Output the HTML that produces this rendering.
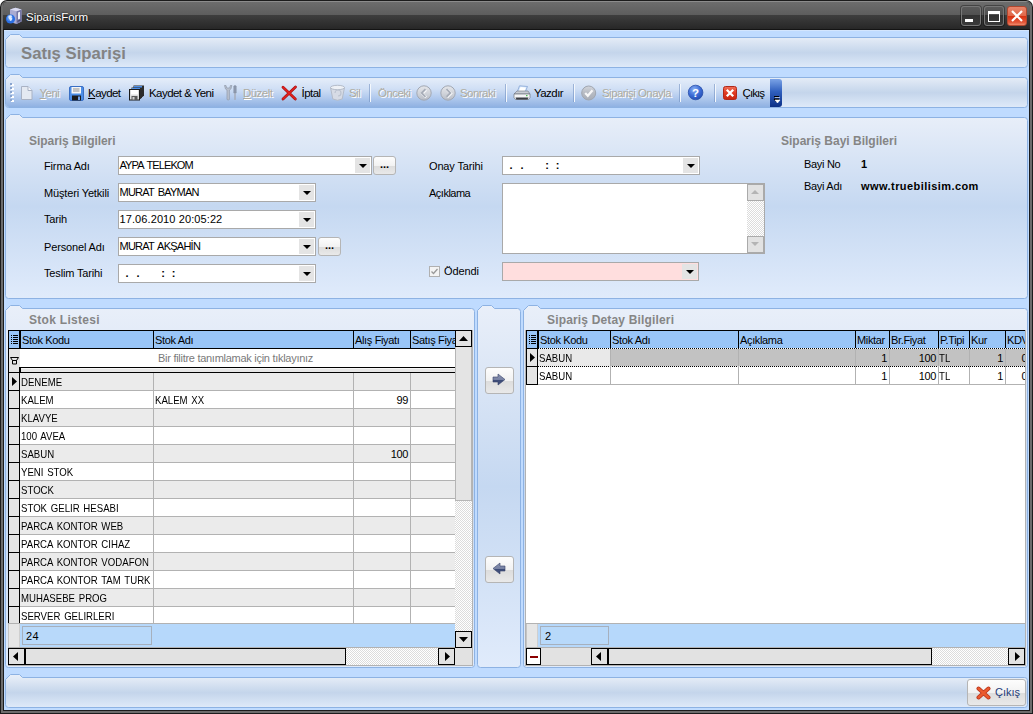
<!DOCTYPE html>
<html><head><meta charset="utf-8"><title>SiparisForm</title>
<style>
html,body{margin:0;padding:0}
body{width:1033px;height:714px;position:relative;overflow:hidden;background:#fff;font:11px "Liberation Sans",sans-serif;color:#000}
*{box-sizing:border-box}
.a,.pn,.t{position:absolute}
.t{white-space:nowrap;line-height:13px}
.win{left:0;top:0;width:1033px;height:714px;background:#1c1c1c;border-radius:7px 7px 0 0}
.client{left:4px;top:30px;width:1025px;height:680px;background:#bfdbff}
.h1{font-weight:bold;font-size:16.7px;color:#838383;line-height:20px}
.h2{font-weight:bold;font-size:12px;color:#858585;line-height:15px}
.inp{background:#fff;border:1px solid #a9a9a9;height:19px}
.dd{position:absolute;right:1px;top:1px;bottom:1px;width:15px;background:#e4e4e4}
.dd:after{content:"";position:absolute;left:3.5px;top:6px;border:4px solid transparent;border-top:4px solid #000;border-bottom:0}
.dis{color:#aeab9f;text-shadow:1px 1px 0 #fff}
.btn{border:1px solid #b5b5b5;border-radius:3px;background:linear-gradient(#fdfdfd,#f2f2f2 50%,#dcdcdc 51%,#e9e9e9)}
.sep{width:2px;height:18px;top:84px;border-left:1px solid rgba(110,140,190,.55);border-right:1px solid #f4f8fd}
.gh{background:#99c5f7;border:1px solid #000;border-left:0;height:18px;top:0;padding:2px 0 0 2px;overflow:hidden;white-space:nowrap}
.grid{background:#fff;overflow:hidden}
.row{position:absolute;left:0;height:18px;border-bottom:1px solid #b4b4b4}
.c{position:absolute;top:0;height:17px;border-right:1px solid #b4b4b4;padding:2px 0 0 1px;white-space:nowrap;overflow:hidden;letter-spacing:-0.35px}
.r{text-align:right;padding-right:2px}
.ind{position:absolute;left:0;top:0;width:13px;height:18px;background:#e6e6e6;border:1px solid #000;border-top:0}
.sb{background:#e2e2e2;border:1px solid #000}
.u{transform-origin:0 0}
.hd{letter-spacing:-0.35px}
.dots{background-image:conic-gradient(#fff 25%,#dcdcdc 0 50%,#fff 0 75%,#dcdcdc 0);background-size:2px 2px}
</style></head><body>
<svg width="0" height="0" style="position:absolute"><defs>
<linearGradient id="gs" x1="0" y1="0" x2="0" y2="1"><stop offset="0" stop-color="#e9eff9"/><stop offset="0.12" stop-color="#e3ebf6"/><stop offset="0.55" stop-color="#c4d5eb"/><stop offset="1" stop-color="#dfeaf9"/></linearGradient>
<linearGradient id="gl" x1="0" y1="0" x2="0" y2="1"><stop offset="0" stop-color="#e9eff9"/><stop offset="0.5" stop-color="#c5d8f1"/><stop offset="1" stop-color="#e0ebfb"/></linearGradient>
<linearGradient id="ga" x1="0" y1="0" x2="0" y2="1"><stop offset="0" stop-color="#8a93b0"/><stop offset="0.5" stop-color="#7882a4"/><stop offset="0.52" stop-color="#3c4b77"/><stop offset="1" stop-color="#43527e"/></linearGradient>
<linearGradient id="gc" x1="0" y1="0" x2="0" y2="1"><stop offset="0" stop-color="#e4e6ea"/><stop offset="0.5" stop-color="#d2d5db"/><stop offset="1" stop-color="#b9bdc6"/></linearGradient>
<linearGradient id="gc2" x1="0" y1="0" x2="0" y2="1"><stop offset="0" stop-color="#d3d6dc"/><stop offset="0.5" stop-color="#b7bbc3"/><stop offset="1" stop-color="#a9aeb8"/></linearGradient>
<radialGradient id="gh" cx="0.4" cy="0.3" r="0.8"><stop offset="0" stop-color="#8db2f4"/><stop offset="0.5" stop-color="#3f6fd8"/><stop offset="1" stop-color="#1d45ab"/></radialGradient>
<linearGradient id="gx" x1="0" y1="0" x2="0" y2="1"><stop offset="0" stop-color="#f0705a"/><stop offset="0.5" stop-color="#e03a22"/><stop offset="1" stop-color="#c8240f"/></linearGradient>
</defs></svg>
<div class="a win"></div>
<div class="a" style="left:1px;top:1px;width:1031px;height:712px;border-radius:6px 6px 0 0;background:linear-gradient(#8c8c8c 0,#8c8c8c 1px,#6c6c6c 1px)"></div>
<div class="a" style="left:3px;top:2px;width:1027px;height:709px;border-radius:4px 4px 0 0;background:#1c1c1c"></div>
<div class="a" style="left:3px;top:2px;width:1027px;height:28px;border-radius:4px 4px 0 0;background:linear-gradient(#6d6d6d 0,#5d5d5d 13px,#3e3e3e 13px,#272727 27px,#141414 27px)"></div>
<div class="a client"></div><div class="a" style="left:4px;top:30px;width:1025px;height:1px;background:#d3e5fd"></div>

<svg class="a" style="left:5px;top:7px" width="18" height="18" viewBox="0 0 18 18">
<path d="M5,2.500 L10.500,0.800 L16.500,2.500 L16.500,14.500 L11.500,17 L5,15 Z" fill="#a9abd2"/><path d="M11.500,4.200 L16.500,2.500 L16.500,14.500 L11.500,17 Z" fill="#7577a6"/><path d="M5,2.500 L10.500,0.800 L16.500,2.500 L11.500,4.200 Z" fill="#d9daf0"/>
<path d="M13,5.500l2,-0.700v7l-2,0.800z" fill="#eeeef8"/><path d="M12.500,13.800l3,-1.200v1l-3,1.300z" fill="#44466e"/>
<circle cx="5.500" cy="12" r="4.600" fill="#2b6fe3"/><circle cx="4.800" cy="11" r="3" fill="#4f8ff0"/><path d="M3.500,8.800q2.200,-1.300 3.600,0.200q-1.300,1.200 0.200,2.700q-0.600,2.300 -2,2.300q-0.300,-1.500 -1.500,-2.200q-0.800,-1.500 -0.300,-3z" fill="#dcebff"/></svg>
<div class="t" style="left:26px;top:11px;color:#fff;font-size:11.5px;text-shadow:0 0 2px #000">SiparisForm</div>
<div class="a" style="left:961px;top:6px;width:20px;height:20px;border:1px solid #777;border-radius:3px;background:linear-gradient(#5a5a5a,#505050 45%,#323232 47%,#3a3a3a);box-shadow:0 0 0 1px rgba(0,0,0,.35)"><div class="a" style="left:3px;top:12px;width:8px;height:3px;background:#fff"></div></div>
<div class="a" style="left:984px;top:6px;width:20px;height:20px;border:1px solid #777;border-radius:3px;background:linear-gradient(#5a5a5a,#505050 45%,#323232 47%,#3a3a3a);box-shadow:0 0 0 1px rgba(0,0,0,.35)"><div class="a" style="left:3px;top:4px;width:12px;height:11px;border:1px solid #fff;border-top-width:3px"></div></div>
<div class="a" style="left:1007px;top:6px;width:20px;height:20px;border:1px solid #b0472f;border-radius:3px;background:linear-gradient(#e8866b,#e0674a 48%,#d62f0e 50%,#e3573a 85%,#ee8a6c)"><svg class="a" style="left:3px;top:3px" width="12" height="12" viewBox="0 0 12 12"><path d="M1,1 L11,11 M11,1 L1,11" stroke="#fff" stroke-width="2.2"/></svg></div>

<svg class="pn" style="left:5px;top:34px" width="1023" height="34" viewBox="0 0 1023 34"><path d="M0.5,5.5 L5.5,0.5 L14.5,0.5 L17.5,3.5 L1019.5,3.5 Q1022.5,3.5 1022.5,6.5 L1022.5,30.5 Q1022.5,33.5 1019.5,33.5 L3.5,33.5 Q0.5,33.5 0.5,30.5 Z" fill="url(#gs)" stroke="#8db2e3"/></svg>
<div class="t h1" style="left:21px;top:44px">Satış Siparişi</div>
<svg class="pn" style="left:5px;top:74px" width="1023" height="34" viewBox="0 0 1023 34"><path d="M0.5,5.5 L5.5,0.5 L14.5,0.5 L17.5,3.5 L1019.5,3.5 Q1022.5,3.5 1022.5,6.5 L1022.5,30.5 Q1022.5,33.5 1019.5,33.5 L3.5,33.5 Q0.5,33.5 0.5,30.5 Z" fill="url(#gs)" stroke="#8db2e3"/></svg>
<svg class="pn" style="left:5px;top:114px" width="1023" height="185" viewBox="0 0 1023 185"><path d="M0.5,5.5 L5.5,0.5 L14.5,0.5 L17.5,3.5 L1019.5,3.5 Q1022.5,3.5 1022.5,6.5 L1022.5,181.5 Q1022.5,184.5 1019.5,184.5 L3.5,184.5 Q0.5,184.5 0.5,181.5 Z" fill="url(#gl)" stroke="#8db2e3"/></svg>
<svg class="pn" style="left:5px;top:305px" width="470" height="363" viewBox="0 0 470 363"><path d="M0.5,5.5 L5.5,0.5 L14.5,0.5 L17.5,3.5 L466.5,3.5 Q469.5,3.5 469.5,6.5 L469.5,359.5 Q469.5,362.5 466.5,362.5 L3.5,362.5 Q0.5,362.5 0.5,359.5 Z" fill="url(#gl)" stroke="#8db2e3"/></svg>
<svg class="pn" style="left:477px;top:305px" width="44" height="363" viewBox="0 0 44 363"><path d="M0.5,5.5 L5.5,0.5 L14.5,0.5 L17.5,3.5 L40.5,3.5 Q43.5,3.5 43.5,6.5 L43.5,359.5 Q43.5,362.5 40.5,362.5 L3.5,362.5 Q0.5,362.5 0.5,359.5 Z" fill="url(#gl)" stroke="#8db2e3"/></svg>
<svg class="pn" style="left:523px;top:305px" width="505" height="363" viewBox="0 0 505 363"><path d="M0.5,5.5 L5.5,0.5 L14.5,0.5 L17.5,3.5 L501.5,3.5 Q504.5,3.5 504.5,6.5 L504.5,359.5 Q504.5,362.5 501.5,362.5 L3.5,362.5 Q0.5,362.5 0.5,359.5 Z" fill="url(#gl)" stroke="#8db2e3"/></svg>
<svg class="pn" style="left:5px;top:674px" width="1023" height="34" viewBox="0 0 1023 34"><path d="M0.5,5.5 L5.5,0.5 L14.5,0.5 L17.5,3.5 L1019.5,3.5 Q1022.5,3.5 1022.5,6.5 L1022.5,30.5 Q1022.5,33.5 1019.5,33.5 L3.5,33.5 Q0.5,33.5 0.5,30.5 Z" fill="url(#gs)" stroke="#8db2e3"/></svg>
<div class="a" style="left:6px;top:79px;width:765px;height:28px;border-radius:3px 0 0 3px;background:linear-gradient(#e3ecf9,#d0dff5 35%,#b3cbee 65%,#8fb1e2)"></div>
<div class="a" style="left:770px;top:79px;width:12px;height:28px;border-radius:0 3px 3px 0;background:linear-gradient(#7ba3e6,#2f5fbe 45%,#0b2f86)"></div>
<svg class="a" style="left:773px;top:96px" width="8" height="8" viewBox="0 0 8 8"><path d="M1,0.5h5M1,3h5l-2.5,3z" fill="#000" stroke="#000"/><path d="M2,1.5h5M2,4h5l-2.5,3z" fill="#fff" stroke="#fff" stroke-width="0.6"/></svg>
<div class="a" style="left:11px;top:84px;width:3px;height:18px;background-image:linear-gradient(#fff 0,#fff 2px,transparent 2px);background-size:3px 4px"></div>
<div class="a" style="left:10px;top:83px;width:2px;height:18px;background-image:linear-gradient(#8aa5cf 0,#8aa5cf 2px,transparent 2px);background-size:2px 4px"></div>
<svg class="a" style="left:20px;top:85px" width="14" height="16" viewBox="0 0 14 16"><path d="M1.5,1.5h6.500l4,4v9h-10.500z" fill="#e4e9f2" stroke="#a9b2c4"/><path d="M8,1.500v4h4" fill="#f4f6fb" stroke="#a9b2c4"/></svg>
<div class="t dis" style="left:39.5px;top:87px;font-size:11.5px;letter-spacing:-0.55px"><u>Y</u>eni</div>
<svg class="a" style="left:69px;top:86px" width="15" height="15" viewBox="0 0 15 15"><rect x="0.500" y="0.500" width="14" height="14" rx="1.500" fill="#4d8ee6" stroke="#3a6fc4"/><rect x="2.500" y="1" width="9.500" height="6.500" fill="#f6f6f6"/><path d="M4,3h6.500M4,5h6.500" stroke="#8f8f8f"/><rect x="3" y="9.500" width="9" height="5" fill="#1a1a1a"/><rect x="9" y="10.500" width="2" height="3.500" fill="#6f9fe6"/></svg>
<div class="t" style="left:88px;top:87px;font-size:11.5px;letter-spacing:-0.55px"><u>K</u>aydet</div>
<svg class="a" style="left:129px;top:85px" width="16" height="16" viewBox="0 0 16 16"><path d="M4.500,0.500h10.500v10l-1.500,1.500h-9z" fill="#2b2b2b"/><rect x="5" y="1" width="8" height="2" fill="#4d8ee6"/><path d="M2.500,2.500h10.500v10l-1.500,1.500h-9z" fill="#2b2b2b"/><rect x="3" y="3" width="8" height="2" fill="#4d8ee6"/><rect x="0.500" y="4.500" width="10" height="10.500" fill="#dcdcdc" stroke="#1a1a1a"/><rect x="2" y="5" width="7" height="4.500" fill="#fff"/><rect x="2.500" y="11" width="6" height="4" fill="#5a5a5a"/><rect x="3.500" y="12" width="2" height="2.500" fill="#d0d0d0"/></svg>
<div class="t" style="left:149px;top:87px;font-size:11.5px;letter-spacing:-0.55px">Kaydet &amp; Yeni</div>
<svg class="a" style="left:223px;top:84px" width="16" height="18" viewBox="0 0 16 18"><path d="M1.500,1.500l1,3.500l1.500,1v9.500q1.200,1 2.400,0v-9.500l1.500,-1l1,-3.500h-1.500l-0.700,2.500h-3l-0.700,-2.500z" fill="#b9c1ce" stroke="#8f99ab" stroke-width="0.700"/><path d="M10.800,2q1.200,-1 2.400,0v7h-2.400z" fill="#8f9aae" stroke="#7d889c" stroke-width="0.500"/><path d="M11.500,9h1v6.500q-0.500,0.800 -1,0z" fill="#c9cfd9" stroke="#9aa3b3" stroke-width="0.600"/></svg>
<div class="t dis" style="left:243px;top:87px;font-size:11.5px;letter-spacing:-0.55px"><u>D</u>üzelt</div>
<svg class="a" style="left:281px;top:85px" width="17" height="16" viewBox="0 0 17 16"><path d="M2,2.200 L14.300,14 M14.500,2 L2,14" stroke="#a01414" stroke-width="2.800" stroke-linecap="round"/><path d="M2,2.200 L14.300,14 M14.500,2 L2,14" stroke="#e22020" stroke-width="1.700" stroke-linecap="round"/></svg>
<div class="t" style="left:301.5px;top:87px;font-size:11.5px;letter-spacing:-0.55px">İptal</div>
<svg class="a" style="left:329px;top:84px" width="17" height="18" viewBox="0 0 17 18"><path d="M1.500,3.500l2.300,11.500q4.700,2.500 9.400,0l2.300,-11.500z" fill="#d6dbe5" stroke="#b3bbc9"/><ellipse cx="8.500" cy="3.500" rx="7" ry="2.200" fill="#eef1f6" stroke="#b3bbc9"/><path d="M6,9a3,3 0 1 1 3,3" fill="none" stroke="#bcc3d0" stroke-width="1.200"/></svg>
<div class="t dis" style="left:349px;top:87px;font-size:11.5px;letter-spacing:-0.55px">Sil</div>
<div class="a sep" style="left:369px"></div>
<div class="t dis" style="left:378px;top:87px;font-size:11.5px;letter-spacing:-0.55px">Önceki</div>
<svg class="a" style="left:416px;top:85px" width="16" height="16" viewBox="0 0 16 16"><circle cx="8" cy="8" r="7.200" fill="url(#gc)" stroke="#a2a8b3"/><path d="M9.500,4.200L5.700,8l3.800,3.800" fill="none" stroke="#f6f7f9" stroke-width="2.600" transform="translate(0.600,0.600)"/><path d="M9.500,4.200L5.700,8l3.800,3.800" fill="none" stroke="#a7adb8" stroke-width="1.800"/></svg>
<svg class="a" style="left:440px;top:85px" width="16" height="16" viewBox="0 0 16 16"><circle cx="8" cy="8" r="7.200" fill="url(#gc)" stroke="#a2a8b3"/><path d="M6.500,4.200L10.300,8l-3.800,3.800" fill="none" stroke="#f6f7f9" stroke-width="2.600" transform="translate(0.600,0.600)"/><path d="M6.500,4.200L10.300,8l-3.800,3.800" fill="none" stroke="#a7adb8" stroke-width="1.800"/></svg>
<div class="t dis" style="left:460px;top:87px;font-size:11.5px;letter-spacing:-0.55px">Sonraki</div>
<div class="a sep" style="left:505px"></div>
<svg class="a" style="left:513px;top:85px" width="18" height="16" viewBox="0 0 18 16"><path d="M6.500,0.800l8,0.700l-2.500,6h-8z" fill="#cfe3fb" stroke="#7f9fd0" stroke-width="0.700"/><path d="M7.500,2l5.500,0.500l-1.800,4.500h-5.700z" fill="#fff"/><path d="M1,9l3,-3h11l2,3z" fill="#c8ccd4" stroke="#6d727c" stroke-width="0.600"/><path d="M1,9h16v3.500l-1.500,2h-13l-1.500,-2z" fill="#f3f4f6" stroke="#6d727c" stroke-width="0.700"/><path d="M2.500,12.500h13l-1,2h-11z" fill="#3a3d44"/><rect x="13" y="10" width="1.500" height="1.200" fill="#4fc04f"/></svg>
<div class="t" style="left:534px;top:87px;font-size:11.5px;letter-spacing:-0.55px">Yazdır</div>
<div class="a sep" style="left:573px"></div>
<svg class="a" style="left:581px;top:85px" width="16" height="16" viewBox="0 0 16 16"><circle cx="7.700" cy="8" r="7" fill="url(#gc2)" stroke="#a0a6b0"/><path d="M4.200,8l2.600,2.800l4.700,-5.600" fill="none" stroke="#f7f7f8" stroke-width="2.200"/></svg>
<div class="t dis" style="left:602px;top:87px;font-size:11.5px;letter-spacing:-0.55px">Siparişi Onayla</div>
<div class="a sep" style="left:679px"></div>
<svg class="a" style="left:687px;top:84px" width="17" height="17" viewBox="0 0 17 17"><circle cx="8.600" cy="8.500" r="7.300" fill="url(#gh)" stroke="#2a4fa8" stroke-width="0.800"/><text x="8.600" y="12.700" text-anchor="middle" font-family="Liberation Sans,sans-serif" font-weight="bold" font-size="11.500" fill="#fff">?</text></svg>
<div class="a sep" style="left:714px"></div>
<svg class="a" style="left:723px;top:86px" width="14" height="14" viewBox="0 0 14 14"><rect x="0.500" y="0.500" width="13" height="13" rx="2" fill="url(#gx)" stroke="#b0281a"/><path d="M3.800,3.800l6.400,6.400M10.200,3.800l-6.400,6.400" stroke="#fff" stroke-width="2.300"/></svg>
<div class="t" style="left:742.500px;top:87px;font-size:11.5px;letter-spacing:-0.9px">Çıkış</div>
<div class="t h2" style="left:29px;top:134px;letter-spacing:-0.05px">Sipariş Bilgileri</div>
<div class="t" style="left:44px;top:160px;letter-spacing:-0.15px;">Firma Adı</div>
<div class="a inp" style="left:118px;top:156px;width:254px;height:19px;background:#fff"><div class="t" style="left:0.5px;top:2px;letter-spacing:-0.9px;word-spacing:1.5px">AYPA TELEKOM</div><div class="dd"></div></div>
<div class="a btn" style="left:373px;top:156px;width:23px;height:19px"><div class="t" style="left:6px;top:1px;font-weight:bold">...</div></div>
<div class="t" style="left:44px;top:187px;letter-spacing:-0.15px;">Müşteri Yetkili</div>
<div class="a inp" style="left:118px;top:183px;width:198px;height:19px;background:#fff"><div class="t" style="left:0.5px;top:2px;letter-spacing:-0.75px;word-spacing:1.5px">MURAT BAYMAN</div><div class="dd"></div></div>
<div class="t" style="left:44px;top:213px;letter-spacing:-0.15px;">Tarih</div>
<div class="a inp" style="left:118px;top:210px;width:198px;height:19px;background:#fff"><div class="t" style="left:0.5px;top:2px;letter-spacing:0.1px;word-spacing:0">17.06.2010 20:05:22</div><div class="dd"></div></div>
<div class="t" style="left:44px;top:241px;letter-spacing:-0.15px;">Personel Adı</div>
<div class="a inp" style="left:118px;top:237px;width:198px;height:19px;background:#fff"><div class="t" style="left:0.5px;top:2px;letter-spacing:-0.75px;word-spacing:1.5px">MURAT AKŞAHİN</div><div class="dd"></div></div>
<div class="a btn" style="left:318px;top:237px;width:23px;height:19px"><div class="t" style="left:6px;top:1px;font-weight:bold">...</div></div>
<div class="t" style="left:44px;top:267px;letter-spacing:-0.15px;">Teslim Tarihi</div>
<div class="a inp" style="left:118px;top:264px;width:198px;height:19px;background:#fff"><div class="t" style="left:0.5px;top:2px;letter-spacing:-0.75px;word-spacing:1.5px"><span style="position:absolute;left:4.5px;top:0;width:6px;text-align:center;font-weight:bold;letter-spacing:0">.</span><span style="position:absolute;left:15.5px;top:0;width:6px;text-align:center;font-weight:bold;letter-spacing:0">.</span><span style="position:absolute;left:40.5px;top:0;width:6px;text-align:center;font-weight:bold;letter-spacing:0">:</span><span style="position:absolute;left:51px;top:0;width:6px;text-align:center;font-weight:bold;letter-spacing:0">:</span></div><div class="dd"></div></div>
<div class="t" style="left:429px;top:160px;letter-spacing:-0.15px;">Onay Tarihi</div>
<div class="a inp" style="left:502px;top:156px;width:198px;height:19px;background:#fff"><div class="t" style="left:0.5px;top:2px;letter-spacing:-0.75px;word-spacing:1.5px"><span style="position:absolute;left:4.5px;top:0;width:6px;text-align:center;font-weight:bold;letter-spacing:0">.</span><span style="position:absolute;left:15.5px;top:0;width:6px;text-align:center;font-weight:bold;letter-spacing:0">.</span><span style="position:absolute;left:40.5px;top:0;width:6px;text-align:center;font-weight:bold;letter-spacing:0">:</span><span style="position:absolute;left:51px;top:0;width:6px;text-align:center;font-weight:bold;letter-spacing:0">:</span></div><div class="dd"></div></div>
<div class="t" style="left:429px;top:187px;letter-spacing:-0.15px;letter-spacing:-0.5px">Açıklama</div>
<div class="a inp" style="left:502px;top:183px;width:263px;height:71px"><div class="a dots" style="right:0;top:0;width:17px;height:69px"></div><div class="a" style="right:0;top:0;width:17px;height:17px;background:#e2e2e2;border:1px solid #aaa"><div class="a" style="left:3px;top:5px;border:4px solid transparent;border-bottom:4px solid #b4b4b4;border-top:0"></div></div><div class="a" style="right:0;bottom:0;width:17px;height:17px;background:#e2e2e2;border:1px solid #aaa"><div class="a" style="left:3px;top:5px;border:4px solid transparent;border-top:4px solid #b4b4b4;border-bottom:0"></div></div></div>
<div class="a" style="left:429px;top:266px;width:11px;height:11px;border:1px solid #b0b0b0;background:#f4f4f4"><svg class="a" style="left:0;top:0" width="9" height="9" viewBox="0 0 9 9"><path d="M1.500,4.500l2,2l4,-4.500" fill="none" stroke="#9a9a9a" stroke-width="1.300"/></svg></div>
<div class="t" style="left:444px;top:265px;letter-spacing:-0.15px;font-size:11px;letter-spacing:-0.1px">Ödendi</div>
<div class="a inp" style="left:502px;top:262px;width:197px;height:19px;background:#ffdede"><div class="t" style="left:0.5px;top:2px;letter-spacing:-0.75px;word-spacing:1.5px"></div><div class="dd"></div></div>
<div class="t h2" style="left:781px;top:134px">Sipariş Bayi Bilgileri</div>
<div class="t" style="left:804px;top:158px;letter-spacing:-0.15px;letter-spacing:-0.3px">Bayi No</div>
<div class="t" style="left:861px;top:158px;letter-spacing:-0.15px;font-weight:bold">1</div>
<div class="t" style="left:804px;top:180px;letter-spacing:-0.15px;letter-spacing:-0.3px">Bayi Adı</div>
<div class="t" style="left:861px;top:180px;letter-spacing:-0.15px;font-weight:bold;letter-spacing:0.43px">www.truebilisim.com</div>
<div class="t h2" style="left:29px;top:313px;letter-spacing:0.3px">Stok Listesi</div>
<div class="a" style="left:8px;top:330px;width:465px;height:336px;background:#b2b2b2;"></div>
<div class="a" style="left:8px;top:330px;width:447px;height:318px;background:#fff;"></div>
<div class="a" style="left:8px;top:330px;width:447px;height:19px;background:#000;"></div>
<div class="a" style="left:9px;top:331px;width:10px;height:17px;background:#99c5f7;"></div>
<div class="a" style="left:21px;top:331px;width:132px;height:17px;background:#99c5f7;overflow:hidden"><div class="t hd" style="left:1px;top:3px">Stok Kodu</div></div>
<div class="a" style="left:154px;top:331px;width:199px;height:17px;background:#99c5f7;overflow:hidden"><div class="t hd" style="left:1px;top:3px">Stok Adı</div></div>
<div class="a" style="left:354px;top:331px;width:56px;height:17px;background:#99c5f7;overflow:hidden"><div class="t hd" style="left:1px;top:3px">Alış Fiyatı</div></div>
<div class="a" style="left:411px;top:331px;width:44px;height:17px;background:#99c5f7;overflow:hidden"><div class="t hd" style="left:1px;top:3px">Satış Fiyatı</div></div>
<div class="a" style="left:8px;top:349px;width:1px;height:276px;background:#000;"></div>
<div class="a" style="left:9px;top:349px;width:11px;height:23px;background:#e4e4e4;"></div>
<div class="a" style="left:20px;top:349px;width:435px;height:18px;background:#fff;"><div class="t" style="left:138px;top:3px;color:#7a7a7a;letter-spacing:-0.28px">Bir filitre tanımlamak için tıklayınız</div></div>
<div class="a" style="left:19px;top:367px;width:436px;height:1px;background:#000;"></div>
<div class="a" style="left:19px;top:368px;width:2px;height:4px;background:#000;"></div>
<div class="a" style="left:21px;top:368px;width:434px;height:4px;background:#e6e6e6;border-top:1px solid #f6f6f6"></div>
<div class="a" style="left:8px;top:372px;width:447px;height:1px;background:#000;"></div>
<svg class="a" style="left:9px;top:356px" width="11" height="10" viewBox="0 0 11 10"><path d="M1.5,1.5h8l-2,3h-4zM3.500,4.500h4v3.500h-4z" fill="none" stroke="#000" stroke-width="1"/></svg>
<div class="a" style="left:20px;top:373px;width:435px;height:17px;background:#ebebeb;"></div>
<div class="a" style="left:20px;top:390px;width:435px;height:1px;background:#b2b2b2;"></div>
<div class="a" style="left:9px;top:373px;width:10px;height:17px;background:#e4e4e4;"></div>
<div class="a" style="left:19px;top:373px;width:1px;height:18px;background:#000;"></div>
<div class="a" style="left:9px;top:390px;width:10px;height:1px;background:#000;"></div>
<div class="t u" style="left:21px;top:376px;max-width:149px;overflow:hidden;word-spacing:1.2px;transform:scaleX(0.875)">DENEME</div>
<div class="a" style="left:20px;top:408px;width:435px;height:1px;background:#b2b2b2;"></div>
<div class="a" style="left:9px;top:391px;width:10px;height:17px;background:#e4e4e4;"></div>
<div class="a" style="left:19px;top:391px;width:1px;height:18px;background:#000;"></div>
<div class="a" style="left:9px;top:408px;width:10px;height:1px;background:#000;"></div>
<div class="t u" style="left:21px;top:394px;max-width:149px;overflow:hidden;word-spacing:1.2px;transform:scaleX(0.875)">KALEM</div>
<div class="t u" style="left:155px;top:394px;max-width:225px;overflow:hidden;word-spacing:1.2px;transform:scaleX(0.875)">KALEM XX</div>
<div class="t u" style="left:354px;top:394px;width:56px;text-align:right;transform:none;padding-right:2px;letter-spacing:-0.4px">99</div>
<div class="a" style="left:20px;top:409px;width:435px;height:17px;background:#ebebeb;"></div>
<div class="a" style="left:20px;top:426px;width:435px;height:1px;background:#b2b2b2;"></div>
<div class="a" style="left:9px;top:409px;width:10px;height:17px;background:#e4e4e4;"></div>
<div class="a" style="left:19px;top:409px;width:1px;height:18px;background:#000;"></div>
<div class="a" style="left:9px;top:426px;width:10px;height:1px;background:#000;"></div>
<div class="t u" style="left:21px;top:412px;max-width:149px;overflow:hidden;word-spacing:1.2px;transform:scaleX(0.875)">KLAVYE</div>
<div class="a" style="left:20px;top:444px;width:435px;height:1px;background:#b2b2b2;"></div>
<div class="a" style="left:9px;top:427px;width:10px;height:17px;background:#e4e4e4;"></div>
<div class="a" style="left:19px;top:427px;width:1px;height:18px;background:#000;"></div>
<div class="a" style="left:9px;top:444px;width:10px;height:1px;background:#000;"></div>
<div class="t u" style="left:21px;top:430px;max-width:149px;overflow:hidden;word-spacing:1.2px;transform:scaleX(0.875)">100 AVEA</div>
<div class="a" style="left:20px;top:445px;width:435px;height:17px;background:#ebebeb;"></div>
<div class="a" style="left:20px;top:462px;width:435px;height:1px;background:#b2b2b2;"></div>
<div class="a" style="left:9px;top:445px;width:10px;height:17px;background:#e4e4e4;"></div>
<div class="a" style="left:19px;top:445px;width:1px;height:18px;background:#000;"></div>
<div class="a" style="left:9px;top:462px;width:10px;height:1px;background:#000;"></div>
<div class="t u" style="left:21px;top:448px;max-width:149px;overflow:hidden;word-spacing:1.2px;transform:scaleX(0.875)">SABUN</div>
<div class="t u" style="left:354px;top:448px;width:56px;text-align:right;transform:none;padding-right:2px;letter-spacing:-0.4px">100</div>
<div class="a" style="left:20px;top:480px;width:435px;height:1px;background:#b2b2b2;"></div>
<div class="a" style="left:9px;top:463px;width:10px;height:17px;background:#e4e4e4;"></div>
<div class="a" style="left:19px;top:463px;width:1px;height:18px;background:#000;"></div>
<div class="a" style="left:9px;top:480px;width:10px;height:1px;background:#000;"></div>
<div class="t u" style="left:21px;top:466px;max-width:149px;overflow:hidden;word-spacing:1.2px;transform:scaleX(0.875)">YENI STOK</div>
<div class="a" style="left:20px;top:481px;width:435px;height:17px;background:#ebebeb;"></div>
<div class="a" style="left:20px;top:498px;width:435px;height:1px;background:#b2b2b2;"></div>
<div class="a" style="left:9px;top:481px;width:10px;height:17px;background:#e4e4e4;"></div>
<div class="a" style="left:19px;top:481px;width:1px;height:18px;background:#000;"></div>
<div class="a" style="left:9px;top:498px;width:10px;height:1px;background:#000;"></div>
<div class="t u" style="left:21px;top:484px;max-width:149px;overflow:hidden;word-spacing:1.2px;transform:scaleX(0.875)">STOCK</div>
<div class="a" style="left:20px;top:516px;width:435px;height:1px;background:#b2b2b2;"></div>
<div class="a" style="left:9px;top:499px;width:10px;height:17px;background:#e4e4e4;"></div>
<div class="a" style="left:19px;top:499px;width:1px;height:18px;background:#000;"></div>
<div class="a" style="left:9px;top:516px;width:10px;height:1px;background:#000;"></div>
<div class="t u" style="left:21px;top:502px;max-width:149px;overflow:hidden;word-spacing:1.2px;transform:scaleX(0.875)">STOK GELIR HESABI</div>
<div class="a" style="left:20px;top:517px;width:435px;height:17px;background:#ebebeb;"></div>
<div class="a" style="left:20px;top:534px;width:435px;height:1px;background:#b2b2b2;"></div>
<div class="a" style="left:9px;top:517px;width:10px;height:17px;background:#e4e4e4;"></div>
<div class="a" style="left:19px;top:517px;width:1px;height:18px;background:#000;"></div>
<div class="a" style="left:9px;top:534px;width:10px;height:1px;background:#000;"></div>
<div class="t u" style="left:21px;top:520px;max-width:149px;overflow:hidden;word-spacing:1.2px;transform:scaleX(0.875)">PARCA KONTOR WEB</div>
<div class="a" style="left:20px;top:552px;width:435px;height:1px;background:#b2b2b2;"></div>
<div class="a" style="left:9px;top:535px;width:10px;height:17px;background:#e4e4e4;"></div>
<div class="a" style="left:19px;top:535px;width:1px;height:18px;background:#000;"></div>
<div class="a" style="left:9px;top:552px;width:10px;height:1px;background:#000;"></div>
<div class="t u" style="left:21px;top:538px;max-width:149px;overflow:hidden;word-spacing:1.2px;transform:scaleX(0.875)">PARCA KONTOR CIHAZ</div>
<div class="a" style="left:20px;top:553px;width:435px;height:17px;background:#ebebeb;"></div>
<div class="a" style="left:20px;top:570px;width:435px;height:1px;background:#b2b2b2;"></div>
<div class="a" style="left:9px;top:553px;width:10px;height:17px;background:#e4e4e4;"></div>
<div class="a" style="left:19px;top:553px;width:1px;height:18px;background:#000;"></div>
<div class="a" style="left:9px;top:570px;width:10px;height:1px;background:#000;"></div>
<div class="t u" style="left:21px;top:556px;max-width:149px;overflow:hidden;word-spacing:1.2px;transform:scaleX(0.875)">PARCA KONTOR VODAFON</div>
<div class="a" style="left:20px;top:588px;width:435px;height:1px;background:#b2b2b2;"></div>
<div class="a" style="left:9px;top:571px;width:10px;height:17px;background:#e4e4e4;"></div>
<div class="a" style="left:19px;top:571px;width:1px;height:18px;background:#000;"></div>
<div class="a" style="left:9px;top:588px;width:10px;height:1px;background:#000;"></div>
<div class="t u" style="left:21px;top:574px;max-width:149px;overflow:hidden;word-spacing:1.2px;transform:scaleX(0.875)">PARCA KONTOR TAM TURK</div>
<div class="a" style="left:20px;top:589px;width:435px;height:17px;background:#ebebeb;"></div>
<div class="a" style="left:20px;top:606px;width:435px;height:1px;background:#b2b2b2;"></div>
<div class="a" style="left:9px;top:589px;width:10px;height:17px;background:#e4e4e4;"></div>
<div class="a" style="left:19px;top:589px;width:1px;height:18px;background:#000;"></div>
<div class="a" style="left:9px;top:606px;width:10px;height:1px;background:#000;"></div>
<div class="t u" style="left:21px;top:592px;max-width:149px;overflow:hidden;word-spacing:1.2px;transform:scaleX(0.875)">MUHASEBE PROG</div>
<div class="a" style="left:20px;top:624px;width:435px;height:1px;background:#b2b2b2;"></div>
<div class="a" style="left:9px;top:607px;width:10px;height:17px;background:#e4e4e4;"></div>
<div class="a" style="left:19px;top:607px;width:1px;height:18px;background:#000;"></div>
<div class="a" style="left:9px;top:624px;width:10px;height:1px;background:#000;"></div>
<div class="t u" style="left:21px;top:610px;max-width:149px;overflow:hidden;word-spacing:1.2px;transform:scaleX(0.875)">SERVER GELIRLERI</div>
<div class="a" style="left:153px;top:373px;width:1px;height:252px;background:#b2b2b2;"></div>
<div class="a" style="left:353px;top:373px;width:1px;height:252px;background:#b2b2b2;"></div>
<div class="a" style="left:410px;top:373px;width:1px;height:252px;background:#b2b2b2;"></div>
<div class="a" style="left:8px;top:623px;width:447px;height:1px;background:#b2b2b2;"></div>
<div class="a" style="left:20px;top:624px;width:435px;height:23px;background:#b6d8fb;"></div>
<div class="a" style="left:8px;top:647px;width:447px;height:1px;background:#b2b2b2;"></div>
<div class="a" style="left:8px;top:624px;width:12px;height:23px;background:#e6e6e6;border-left:1px solid #c4c4c4;border-right:1px solid #cfcfcf"></div>
<div class="a" style="left:22px;top:626px;width:130px;height:19px;background:#b8d9fa;border:1px solid #a6b0bd"><div class="t" style="left:3px;top:3px;letter-spacing:0.3px">24</div></div>
<div class="a" style="left:455px;top:347px;width:17px;height:284px;background:;"></div>
<div class="a dots" style="left:455px;top:347px;width:17px;height:284px"></div>
<div class="a" style="left:455px;top:347px;width:17px;height:154px;background:#e4e4e4;border:1px solid #b5b5b5;border-top:0"></div>
<div class="a" style="left:455px;top:330px;width:17px;height:17px;background:#e2e2e2;border:1px solid #000"></div>
<div class="a" style="left:455px;top:631px;width:17px;height:17px;background:#e2e2e2;border:1px solid #000"></div>
<div class="a dots" style="left:8px;top:648px;width:447px;height:17px"></div>
<div class="a" style="left:8px;top:648px;width:17px;height:17px;background:#e2e2e2;border:1px solid #000"></div>
<div class="a" style="left:438px;top:648px;width:17px;height:17px;background:#e2e2e2;border:1px solid #000"></div>
<div class="a" style="left:24px;top:648px;width:322px;height:17px;background:#e2e2e2;border:1px solid #000;border-left-width:2px"></div>
<div class="a" style="left:455px;top:648px;width:17px;height:17px;background:#e2e2e2;"></div>
<div class="a btn" style="left:485px;top:367px;width:29px;height:27px"><svg class="a" style="left:5px;top:5px" width="16" height="13" viewBox="0 0 16 13"><path d="M2,4h5v-3l7,5.500l-7,5.500v-3h-5z" fill="url(#ga)" stroke="#35426a" stroke-width="0.600"/></svg></div>
<div class="a btn" style="left:485px;top:556px;width:29px;height:27px"><svg class="a" style="left:5px;top:5px" width="16" height="13" viewBox="0 0 16 13"><path d="M14,4h-5v-3l-7,5.500l7,5.500v-3h5z" fill="url(#ga)" stroke="#35426a" stroke-width="0.600"/></svg></div>
<div class="t h2" style="left:547px;top:313px;letter-spacing:0.165px">Sipariş Detay Bilgileri</div>
<div class="a" style="left:525px;top:330px;width:501px;height:336px;background:#b2b2b2;"></div>
<div class="a" style="left:526px;top:330px;width:499px;height:318px;background:#fff;"></div>
<div class="a" style="left:526px;top:330px;width:499px;height:19px;background:#000;"></div>
<div class="a" style="left:527px;top:331px;width:10px;height:17px;background:#99c5f7;"></div>
<div class="a" style="left:539px;top:331px;width:71px;height:17px;background:#99c5f7;overflow:hidden"><div class="t hd" style="left:1px;top:3px">Stok Kodu</div></div>
<div class="a" style="left:611px;top:331px;width:127px;height:17px;background:#99c5f7;overflow:hidden"><div class="t hd" style="left:1px;top:3px">Stok Adı</div></div>
<div class="a" style="left:739px;top:331px;width:116px;height:17px;background:#99c5f7;overflow:hidden"><div class="t hd" style="left:1px;top:3px">Açıklama</div></div>
<div class="a" style="left:856px;top:331px;width:33px;height:17px;background:#99c5f7;overflow:hidden"><div class="t hd" style="left:1px;top:3px">Miktar</div></div>
<div class="a" style="left:890px;top:331px;width:48px;height:17px;background:#99c5f7;overflow:hidden"><div class="t hd" style="left:1px;top:3px">Br.Fiyat</div></div>
<div class="a" style="left:939px;top:331px;width:30px;height:17px;background:#99c5f7;overflow:hidden"><div class="t hd" style="left:1px;top:3px">P.Tipi</div></div>
<div class="a" style="left:970px;top:331px;width:35px;height:17px;background:#99c5f7;overflow:hidden"><div class="t hd" style="left:1px;top:3px">Kur</div></div>
<div class="a" style="left:1006px;top:331px;width:19px;height:17px;background:#99c5f7;overflow:hidden"><div class="t hd" style="left:1px;top:3px">KDV</div></div>
<div class="a" style="left:538px;top:349px;width:487px;height:17px;background:#c2c2c2;"></div>
<div class="a" style="left:538px;top:349px;width:72px;height:17px;background:#e9e9e9;"></div>
<div class="a" style="left:538px;top:348px;width:487px;height:1px;background:;background-image:linear-gradient(90deg,#000 50%,#fff 0);background-size:2px 1px"></div>
<div class="a" style="left:538px;top:366px;width:487px;height:1px;background:;background-image:linear-gradient(90deg,#000 50%,#eee 0);background-size:2px 1px"></div>
<div class="a" style="left:526px;top:349px;width:1px;height:18px;background:#000;"></div>
<div class="a" style="left:527px;top:349px;width:10px;height:17px;background:#e4e4e4;"></div>
<div class="a" style="left:537px;top:349px;width:1px;height:18px;background:#000;"></div>
<div class="a" style="left:527px;top:366px;width:10px;height:1px;background:#000;"></div>
<div class="t u" style="left:539px;top:352px;max-width:78px;overflow:hidden;word-spacing:1.2px;transform:scaleX(0.875)">SABUN</div>
<div class="t u" style="left:856px;top:352px;width:33px;text-align:right;transform:none;padding-right:2px;letter-spacing:-0.4px">1</div>
<div class="t u" style="left:890px;top:352px;width:48px;text-align:right;transform:none;padding-right:2px;letter-spacing:-0.4px">100</div>
<div class="t u" style="left:939px;top:352px;max-width:32px;overflow:hidden;word-spacing:1.2px;transform:scaleX(0.875)">TL</div>
<div class="t u" style="left:970px;top:352px;width:35px;text-align:right;transform:none;padding-right:2px;letter-spacing:-0.4px">1</div>
<div class="a" style="left:1006px;top:349px;width:19px;height:17px;overflow:hidden"><div class="t u" style="left:0;top:3px;width:21.5px;text-align:right;transform:none">0</div></div>
<div class="a" style="left:538px;top:384px;width:487px;height:1px;background:#b2b2b2;"></div>
<div class="a" style="left:526px;top:367px;width:1px;height:18px;background:#000;"></div>
<div class="a" style="left:527px;top:367px;width:10px;height:17px;background:#e4e4e4;"></div>
<div class="a" style="left:537px;top:367px;width:1px;height:18px;background:#000;"></div>
<div class="a" style="left:527px;top:384px;width:10px;height:1px;background:#000;"></div>
<div class="t u" style="left:539px;top:370px;max-width:78px;overflow:hidden;word-spacing:1.2px;transform:scaleX(0.875)">SABUN</div>
<div class="t u" style="left:856px;top:370px;width:33px;text-align:right;transform:none;padding-right:2px;letter-spacing:-0.4px">1</div>
<div class="t u" style="left:890px;top:370px;width:48px;text-align:right;transform:none;padding-right:2px;letter-spacing:-0.4px">100</div>
<div class="t u" style="left:939px;top:370px;max-width:32px;overflow:hidden;word-spacing:1.2px;transform:scaleX(0.875)">TL</div>
<div class="t u" style="left:970px;top:370px;width:35px;text-align:right;transform:none;padding-right:2px;letter-spacing:-0.4px">1</div>
<div class="a" style="left:1006px;top:367px;width:19px;height:17px;overflow:hidden"><div class="t u" style="left:0;top:3px;width:21.5px;text-align:right;transform:none">0</div></div>
<div class="a" style="left:610px;top:349px;width:1px;height:36px;background:#b2b2b2;"></div>
<div class="a" style="left:738px;top:349px;width:1px;height:36px;background:#b2b2b2;"></div>
<div class="a" style="left:855px;top:349px;width:1px;height:36px;background:#b2b2b2;"></div>
<div class="a" style="left:889px;top:349px;width:1px;height:36px;background:#b2b2b2;"></div>
<div class="a" style="left:938px;top:349px;width:1px;height:36px;background:#b2b2b2;"></div>
<div class="a" style="left:969px;top:349px;width:1px;height:36px;background:#b2b2b2;"></div>
<div class="a" style="left:1005px;top:349px;width:1px;height:36px;background:#b2b2b2;"></div>
<div class="a" style="left:526px;top:623px;width:499px;height:1px;background:#b2b2b2;"></div>
<div class="a" style="left:538px;top:624px;width:487px;height:23px;background:#b6d8fb;"></div>
<div class="a" style="left:526px;top:647px;width:499px;height:1px;background:#b2b2b2;"></div>
<div class="a" style="left:526px;top:624px;width:12px;height:23px;background:#e6e6e6;border-left:1px solid #c4c4c4;border-right:1px solid #cfcfcf"></div>
<div class="a" style="left:540px;top:626px;width:69px;height:19px;background:#b8d9fa;border:1px solid #a6b0bd"><div class="t" style="left:4px;top:3px">2</div></div>
<div class="a dots" style="left:526px;top:648px;width:499px;height:17px"></div>
<div class="a" style="left:526px;top:648px;width:66px;height:17px;background:#e2e2e2;"></div>
<div class="a" style="left:526px;top:648px;width:15px;height:17px;background:#fff;border:1px solid #000"><div class="a" style="left:3px;top:7px;width:8px;height:2px;background:#8b0000"></div></div>
<div class="a" style="left:591px;top:648px;width:17px;height:17px;background:#e2e2e2;border:1px solid #000"></div>
<div class="a" style="left:1008px;top:648px;width:17px;height:17px;background:#e2e2e2;border:1px solid #000"></div>
<div class="a" style="left:607px;top:648px;width:325px;height:17px;background:#e2e2e2;border:1px solid #000;border-left-width:2px"></div>
<svg class="a" style="left:0;top:0;pointer-events:none" width="1033" height="714" viewBox="0 0 1033 714"><path d="M12,377v9l5,-4.500zM459,341h9l-4.5,-5zM459,637h9l-4.5,5zM18,652v9l-5,-4.5zM445,652v9l5,-4.5zM530,353v9l5,-4.500zM601,652v9l-5,-4.5zM1015,652v9l5,-4.5z" fill="#000"/><path d="M11,335h1M13,335h5M11,337h1M13,337h5M11,339h1M13,339h5M11,341h1M13,341h5M11,343h1M13,343h5M529,335h1M531,335h5M529,337h1M531,337h5M529,339h1M531,339h5M529,341h1M531,341h5M529,343h1M531,343h5" stroke="#000" fill="none" shape-rendering="crispEdges"/></svg>
<div class="a btn" style="left:967px;top:679px;width:59px;height:27px"><svg class="a" style="left:8px;top:6px" width="15" height="14" viewBox="0 0 15 14"><path d="M2.500,2.500 L12.500,11.500 M12.500,2.500 L2.500,11.500" stroke="#b8321a" stroke-width="4" stroke-linecap="round"/><path d="M2.500,2.500 L12.500,11.500 M12.500,2.500 L2.500,11.500" stroke="#ea5a2e" stroke-width="2.400" stroke-linecap="round"/></svg><div class="t" style="left:27px;top:6px;color:#1d3c7a">Çıkış</div></div>
</body></html>
